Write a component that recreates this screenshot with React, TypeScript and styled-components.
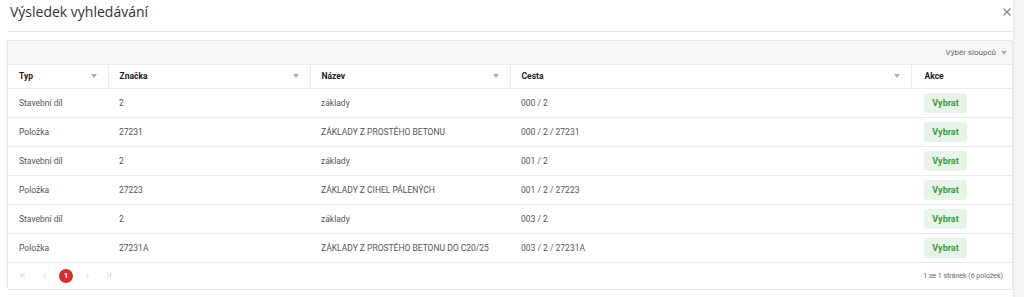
import React from 'react';
import styled, { createGlobalStyle } from 'styled-components';

const GlobalStyle = createGlobalStyle`
  html, body {
    margin: 0;
    padding: 0;
    background: #fff;
  }
  body {
    font-family: Roboto, "Liberation Sans", Arial, sans-serif;
    color: #333;
  }
`;

const Page = styled.div`
  display: flex;
  height: 297px;
  overflow: hidden;
`;

const Main = styled.div`
  flex: 1;
  padding: 0 0 0 7px;
`;

const Scrollbar = styled.div`
  width: 10px;
  background: #f4f4f4;
  border-left: 1px solid #ececec;
`;

const Header = styled.div`
  display: flex;
  align-items: center;
  justify-content: space-between;
  height: 32px;
  border-bottom: 1px solid #e6e6e6;
  padding: 0 1px 0 3px;
  box-sizing: border-box;
`;

const Title = styled.h2`
  margin: 0;
  font-family: "Open Sans", Roboto, sans-serif;
  font-size: 14px;
  font-weight: 500;
  color: #333;
  position: relative;
  top: -4px;
`;

const Close = styled.button`
  border: 0;
  background: none;
  padding: 0;
  width: 10px;
  height: 10px;
  display: flex;
  align-items: center;
  justify-content: center;
  position: relative;
  top: -4px;
`;

const Card = styled.div`
  margin-top: 8px;
  border: 1px solid #e6e6e6;
  border-radius: 2px;
  background: #fff;
`;

const Toolbar = styled.div`
  display: flex;
  justify-content: flex-end;
  align-items: center;
  height: 23px;
  background: #f7f7f7;
  border-bottom: 1px solid #ececec;
  padding-right: 5px;
  font-size: 8px;
  color: #666;
  gap: 5px;
`;

const Table = styled.table`
  width: 100%;
  border-collapse: collapse;
  table-layout: fixed;
`;

const Th = styled.th<{ $w?: number; $last?: boolean }>`
  width: ${(p) => (p.$w ? `${p.$w}px` : 'auto')};
  height: 23px;
  padding: 0 11px 0 ${(p) => (p.$last ? 13 : 11)}px;
  text-align: left;
  font-size: 8.5px;
  font-weight: 700;
  color: #222;
  border-bottom: 1px solid #ececec;
  border-right: ${(p) => (p.$last ? '0' : '1px solid #ececec')};
  box-sizing: border-box;
`;

const ThInner = styled.div`
  display: flex;
  align-items: center;
  justify-content: space-between;
`;

const Caret = styled.span`
  width: 0;
  height: 0;
  border-left: 3.5px solid transparent;
  border-right: 3.5px solid transparent;
  border-top: 4px solid #b0b0b0;
`;

const Td = styled.td<{ $action?: boolean }>`
  height: 28px;
  padding: 0 11px 0 ${(p) => (p.$action ? 13 : 11)}px;
  font-size: 8.5px;
  color: #555;
  border-bottom: 1px solid #ececec;
  white-space: nowrap;
`;

const PickButton = styled.button`
  border: 0;
  background: #e7f4e8;
  color: #3c9b41;
  font-family: Roboto, "Liberation Sans", sans-serif;
  font-weight: 700;
  font-size: 9px;
  height: 20px;
  width: 43px;
  border-radius: 4px;
  padding: 0;
`;

const Footer = styled.div`
  display: flex;
  justify-content: space-between;
  align-items: center;
  height: 26px;
  padding: 0 9px 0 9px;
`;

const Pager = styled.div`
  display: flex;
  align-items: center;
  gap: 8px;
`;

const PageIcon = styled.span`
  width: 13px;
  display: flex;
  justify-content: center;
  color: #c8c8c8;
`;

const PageNum = styled.span`
  width: 14px;
  height: 14px;
  border-radius: 50%;
  background: #d32f2f;
  color: #fff;
  font-size: 8px;
  font-weight: 700;
  display: flex;
  align-items: center;
  justify-content: center;
`;

const Info = styled.span`
  font-size: 7px;
  color: #666;
`;

const rows = [
  { typ: 'Stavební díl', znacka: '2', nazev: 'základy', cesta: '000 / 2' },
  { typ: 'Položka', znacka: '27231', nazev: 'ZÁKLADY Z PROSTÉHO BETONU', cesta: '000 / 2 / 27231' },
  { typ: 'Stavební díl', znacka: '2', nazev: 'základy', cesta: '001 / 2' },
  { typ: 'Položka', znacka: '27223', nazev: 'ZÁKLADY Z CIHEL PÁLENÝCH', cesta: '001 / 2 / 27223' },
  { typ: 'Stavební díl', znacka: '2', nazev: 'základy', cesta: '003 / 2' },
  { typ: 'Položka', znacka: '27231A', nazev: 'ZÁKLADY Z PROSTÉHO BETONU DO C20/25', cesta: '003 / 2 / 27231A' },
];

const Chevron = ({ dir, bar }: { dir: 'l' | 'r'; bar?: boolean }) => (
  <svg width="7" height="7" viewBox="0 0 8 8" fill="none" stroke="currentColor" strokeWidth="1">
    {dir === 'l' ? <path d="M5.5 1.5 3 4l2.5 2.5" /> : <path d="M2.5 1.5 5 4 2.5 6.5" />}
    {bar && (dir === 'l' ? <path d="M1.5 1.5v5" /> : <path d="M6.5 1.5v5" />)}
  </svg>
);

const App: React.FC = () => (
  <Page>
    <GlobalStyle />
    <Main>
      <Header>
        <Title>Výsledek vyhledávání</Title>
        <Close aria-label="Zavřít">
          <svg width="8" height="8" viewBox="0 0 8 8" stroke="#808080" strokeWidth="1.1">
            <path d="M0.5 0.5l7 7M7.5 0.5l-7 7" />
          </svg>
        </Close>
      </Header>
      <Card>
        <Toolbar>
          Výběr sloupců <Caret />
        </Toolbar>
        <Table>
          <thead>
            <tr>
              <Th $w={100}><ThInner>Typ <Caret /></ThInner></Th>
              <Th $w={202}><ThInner>Značka <Caret /></ThInner></Th>
              <Th $w={200}><ThInner>Název <Caret /></ThInner></Th>
              <Th><ThInner>Cesta <Caret /></ThInner></Th>
              <Th $w={101} $last>Akce</Th>
            </tr>
          </thead>
          <tbody>
            {rows.map((r, i) => (
              <tr key={i}>
                <Td>{r.typ}</Td>
                <Td>{r.znacka}</Td>
                <Td>{r.nazev}</Td>
                <Td>{r.cesta}</Td>
                <Td $action><PickButton>Vybrat</PickButton></Td>
              </tr>
            ))}
          </tbody>
        </Table>
        <Footer>
          <Pager>
            <PageIcon><Chevron dir="l" bar /></PageIcon>
            <PageIcon><Chevron dir="l" /></PageIcon>
            <PageNum>1</PageNum>
            <PageIcon><Chevron dir="r" /></PageIcon>
            <PageIcon><Chevron dir="r" bar /></PageIcon>
          </Pager>
          <Info>1 ze 1 stránek (6 položek)</Info>
        </Footer>
      </Card>
    </Main>
    <Scrollbar />
  </Page>
);

export default App;
